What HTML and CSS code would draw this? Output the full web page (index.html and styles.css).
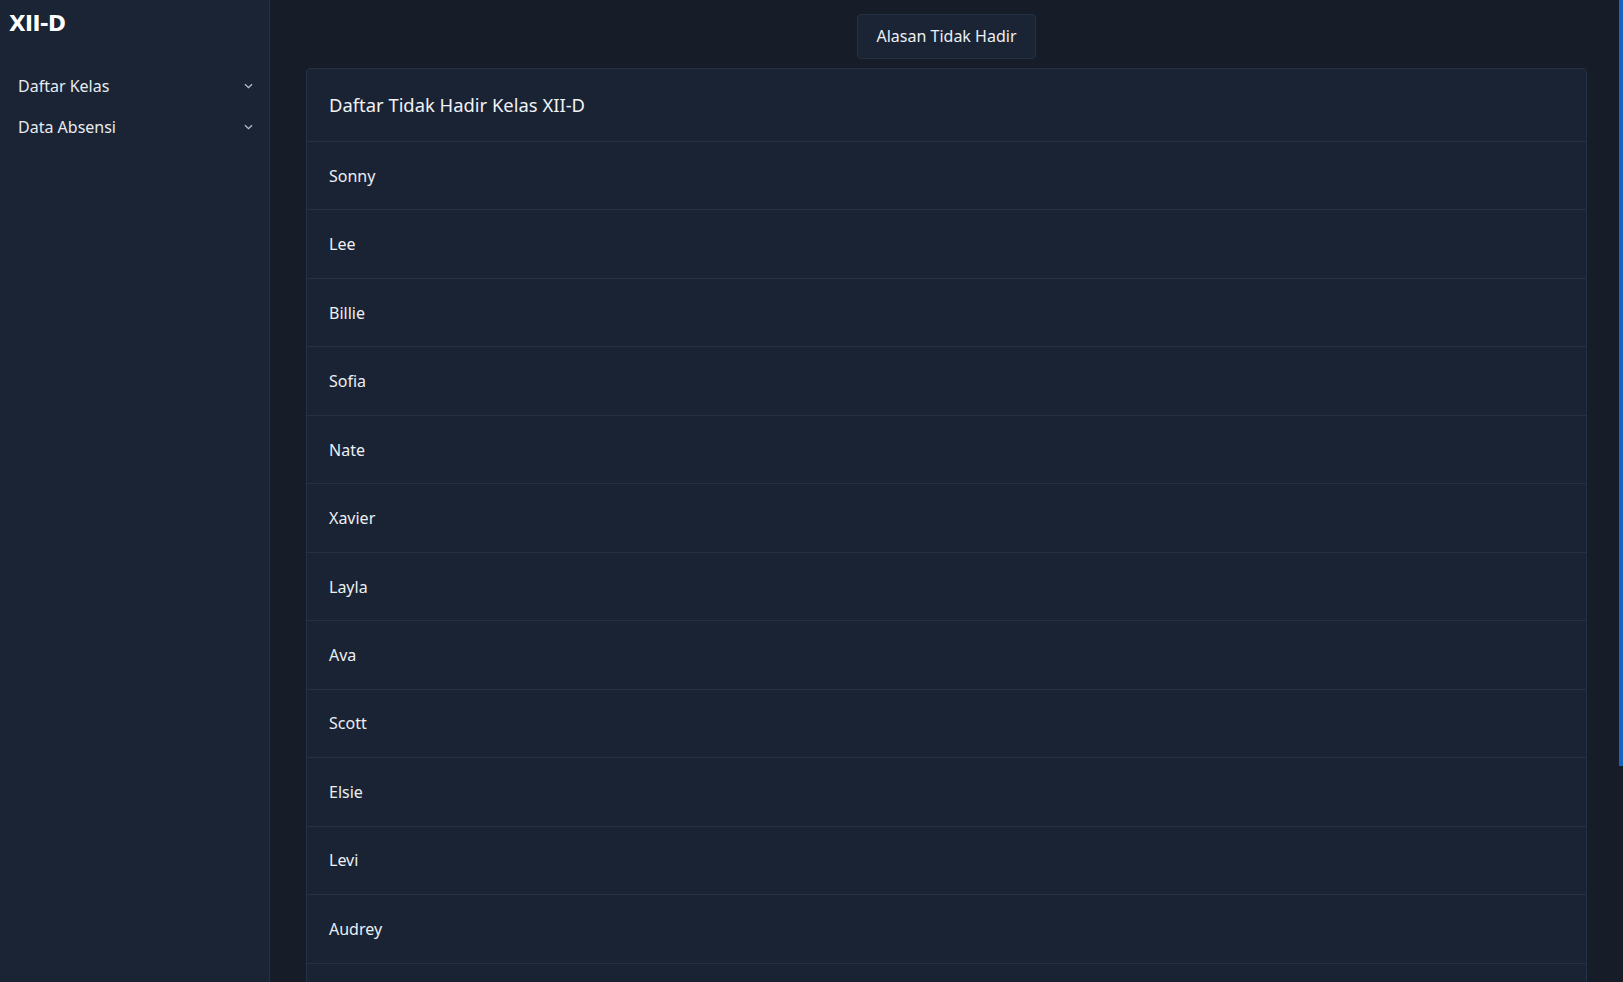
FILE: index.html
```html
<!DOCTYPE html>
<html lang="id">
<head>
<meta charset="utf-8">
<title>XII-D</title>
<link rel="stylesheet" href="styles.css">
</head>
<body>
<div class="layout">
  <aside class="sidebar">
    <div class="brand">XII-D</div>
    <nav class="menu">
      <div class="menu-item">
        <span>Daftar Kelas</span>
        <svg class="chev" width="9" height="6" viewBox="0 0 9 6"><path d="M1 1.2l3.5 3.5 3.5-3.5" fill="none" stroke="currentColor" stroke-width="1.3"/></svg>
      </div>
      <div class="menu-item">
        <span>Data Absensi</span>
        <svg class="chev" width="9" height="6" viewBox="0 0 9 6"><path d="M1 1.2l3.5 3.5 3.5-3.5" fill="none" stroke="currentColor" stroke-width="1.3"/></svg>
      </div>
    </nav>
  </aside>
  <main class="main">
    <div class="toolbar">
      <button class="btn">Alasan Tidak Hadir</button>
    </div>
    <section class="card">
      <header class="card-header">Daftar Tidak Hadir Kelas XII-D</header>
      <ul class="list">
        <li>Sonny</li>
        <li>Lee</li>
        <li>Billie</li>
        <li>Sofia</li>
        <li>Nate</li>
        <li>Xavier</li>
        <li>Layla</li>
        <li>Ava</li>
        <li>Scott</li>
        <li>Elsie</li>
        <li>Levi</li>
        <li>Audrey</li>
        <li>Hugo</li>
        <li>Mia</li>
      </ul>
    </section>
  </main>
</div>
<div class="scroll-thumb"></div>
</body>
</html>
```

FILE: styles.css
```css
* { box-sizing: border-box; }
html, body {
  margin: 0;
  height: 100%;
  overflow: hidden;
}
body {
  background: #161d28;
  color: #eceff3;
  font-family: "Noto Sans", "Open Sans", sans-serif;
  font-size: 16px;
}
.layout {
  display: flex;
  height: 100vh;
}
.sidebar {
  width: 270px;
  flex: none;
  background: #1b2435;
  border-right: 1px solid #243044;
  padding: 7px 0 0 0;
}
.brand {
  font-family: "DejaVu Sans", sans-serif;
  font-weight: bold;
  font-size: 21.5px;
  line-height: 34px;
  padding-left: 9px;
  color: #ffffff;
  letter-spacing: -0.6px;
}
.menu {
  margin-top: 25px;
  display: flex;
  flex-direction: column;
}
.menu-item {
  display: flex;
  align-items: center;
  justify-content: space-between;
  height: 40.5px;
  padding: 0 16px 0 18px;
  font-size: 16px;
  color: #e8ebef;
}
.chev { color: #b9c0cb; }
.main {
  flex: 1;
  padding: 14px 36px 0 36px;
  display: flex;
  flex-direction: column;
  align-items: center;
  min-width: 0;
}
.toolbar {
  display: flex;
  justify-content: center;
  width: 100%;
}
.btn {
  font-family: "Noto Sans", sans-serif;
  font-size: 16px;
  line-height: 22px;
  color: #eceff3;
  background: #1b2435;
  border: 1px solid #243044;
  border-radius: 4px;
  height: 45px;
  padding: 0 19px 2px;
}
.card {
  width: 100%;
  margin-top: 9px;
  background: #1a2334;
  border: 1px solid #243044;
  border-radius: 4px;
}
.card-header {
  font-size: 18.4px;
  line-height: 28px;
  padding: 22px 22px;
  border-bottom: 1px solid #243044;
  color: #f0f2f5;
}
.list {
  list-style: none;
  margin: 0;
  padding: 0;
}
.list li {
  font-size: 16px;
  line-height: 24px;
  padding: 21.74px 22px;
  border-bottom: 1px solid #243044;
}
.scroll-thumb {
  position: fixed;
  top: 0;
  right: 0;
  width: 4px;
  height: 766px;
  background: #1663c4;
}
```
